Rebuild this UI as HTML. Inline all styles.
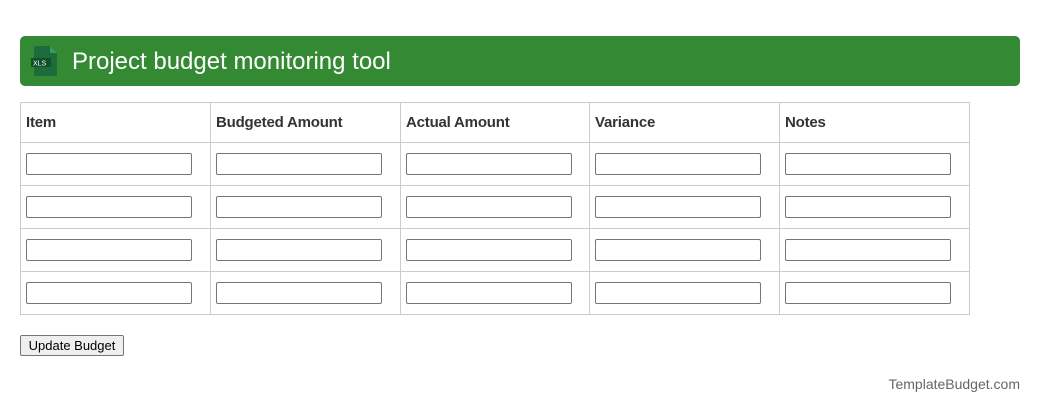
<!DOCTYPE html>
<html><head><style>
body{margin:0;background:#fff;font-family:"Liberation Sans",Roboto,sans-serif;width:1040px;height:413px;position:relative;overflow:hidden}
.hdr{position:absolute;left:20px;top:36px;width:1000px;height:50px;background:#338a33;border-radius:5px}
.hdr span{position:absolute;left:52px;top:11px;color:#fff;font-size:24px;line-height:30px}
table{position:absolute;left:20px;top:102px;border-collapse:collapse}
td,th{border:1px solid #ccc;padding:0 5px;text-align:left;vertical-align:middle}
th{height:39px;font-size:15px;font-weight:bold;color:#333;letter-spacing:-0.2px}
td{height:42px}
.c{width:179px}
input{display:block;box-sizing:border-box;width:166px;height:22px;border:1px solid #767676;border-radius:2px;margin:0}
button{position:absolute;left:20px;top:335px;width:104px;height:21px;font-size:13px;font-family:"Liberation Sans",sans-serif;background:#efefef;border:1px solid #767676;border-radius:2px;padding:0;color:#000}
.ft{position:absolute;right:20px;top:376px;font-size:14px;color:#666}
</style></head><body>
<div class="hdr">
<svg style="position:absolute;left:11px;top:10px" width="28" height="30" viewBox="0 0 28 30"><path d="M5 0h14l7 7v21a2 2 0 0 1-2 2H5a2 2 0 0 1-2-2V2a2 2 0 0 1 2-2z" fill="#1d6b3a"/><path d="M19 0v7h7z" fill="#3a9a5a"/><rect x="0" y="12" width="20" height="9" fill="#12502a"/><text x="2" y="19.5" font-size="7" fill="#fff" font-family="Liberation Sans">XLS</text></svg>
<span>Project budget monitoring tool</span></div>
<table>
<tr><th class="c">Item</th><th class="c">Budgeted Amount</th><th class="c" style="width:178px">Actual Amount</th><th class="c">Variance</th><th class="c">Notes</th></tr>
<tr><td><input></td><td><input></td><td><input></td><td><input></td><td><input></td></tr>
<tr><td><input></td><td><input></td><td><input></td><td><input></td><td><input></td></tr>
<tr><td><input></td><td><input></td><td><input></td><td><input></td><td><input></td></tr>
<tr><td><input></td><td><input></td><td><input></td><td><input></td><td><input></td></tr>
</table>
<button>Update Budget</button>
<div class="ft">TemplateBudget.com</div>
</body></html>
